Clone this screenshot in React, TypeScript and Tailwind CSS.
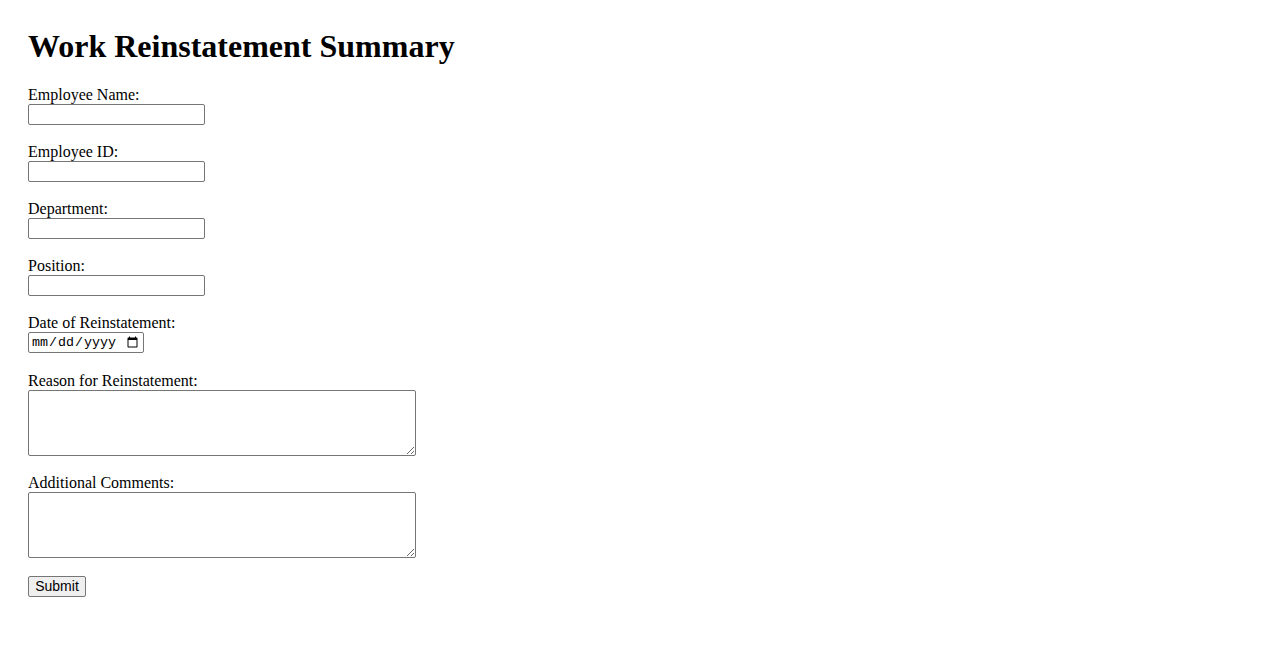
import React, { useState } from 'react';

const fields = [
  { id: 'name', label: 'Employee Name:' },
  { id: 'empId', label: 'Employee ID:' },
  { id: 'dept', label: 'Department:' },
  { id: 'position', label: 'Position:' },
];

const App: React.FC = () => {
  const [values, setValues] = useState<Record<string, string>>({});

  const update = (key: string, val: string) =>
    setValues((v) => ({ ...v, [key]: val }));

  return (
    <div className="min-h-screen bg-white px-[28px] pt-[28px] font-['Liberation_Serif',serif] text-[16px] leading-[18px] text-black">
      <h1 className="mb-[21px] h-[37px] text-[32px] font-bold leading-[37px]">
        Work Reinstatement Summary
      </h1>

      <form onSubmit={(e) => e.preventDefault()} className="flex flex-col items-start">
        {fields.map((f) => (
          <div key={f.id} className="mb-[18px] flex flex-col items-start">
            <label htmlFor={f.id} className="h-[18px]">
              {f.label}
            </label>
            <input
              id={f.id}
              type="text"
              value={values[f.id] || ''}
              onChange={(e) => update(f.id, e.target.value)}
              className="h-[21px] w-[177px] rounded-[2px] border border-[#767676] bg-white px-[2px] font-['Liberation_Sans',sans-serif] text-[13.33px]"
            />
          </div>
        ))}

        <div className="mb-[19px] flex flex-col items-start">
          <label htmlFor="date" className="h-[18px]">
            Date of Reinstatement:
          </label>
          <input
            id="date"
            type="date"
            className="h-[21px] w-[116px] rounded-[2px] border border-[#767676] bg-white px-[2px] font-['Liberation_Mono',monospace] text-[13.33px] leading-[17px]"
          />
        </div>

        <div className="mb-[18px] flex flex-col items-start">
          <label htmlFor="reason" className="h-[18px]">
            Reason for Reinstatement:
          </label>
          <textarea
            id="reason"
            className="h-[66px] w-[388px] resize rounded-[2px] border border-[#767676] bg-white p-[2px] font-['Liberation_Mono',monospace] text-[13.33px]"
          />
        </div>

        <div className="mb-[18px] flex flex-col items-start">
          <label htmlFor="comments" className="h-[18px]">
            Additional Comments:
          </label>
          <textarea
            id="comments"
            className="h-[66px] w-[388px] resize rounded-[2px] border border-[#767676] bg-white p-[2px] font-['Liberation_Mono',monospace] text-[13.33px]"
          />
        </div>

        <button
          type="submit"
          className="h-[21px] w-[58px] rounded-[2px] border border-[#767676] bg-[#efefef] font-['Liberation_Sans',sans-serif] text-[14px] leading-[17px] text-black"
        >
          Submit
        </button>
      </form>
    </div>
  );
};

export default App;
